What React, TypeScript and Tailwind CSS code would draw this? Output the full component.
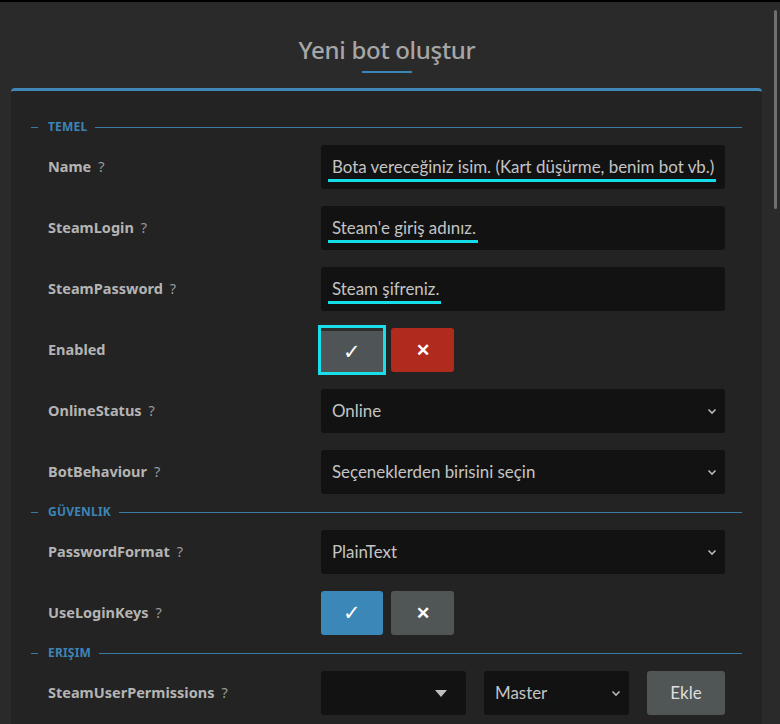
import { ReactNode } from 'react'

const font = { fontFamily: '"Noto Sans", "Open Sans", sans-serif' }
const fieldFont = { fontFamily: 'Lato, "Noto Sans", sans-serif' }

// Başlık şeridi (fieldset legend görünümü)
function Legend({ title, className = '' }: { title: string; className?: string }) {
    return (
        <div className={`flex items-center h-[16px] mb-[10px] ${className}`}>
            <div className="w-[7px] h-px bg-[#3b7aa3]" />
            <span className="ml-[10px] mr-[8px] text-[12px] font-bold tracking-[0.2px] text-[#3d85b6] leading-none">{title}</span>
            <div className="flex-1 h-px bg-[#3b7aa3]" />
        </div>
    )
}

function Row({ label, help = true, children }: { label: string; help?: boolean; children: ReactNode }) {
    return (
        <div className="flex items-center h-[44px] px-[17px]">
            <div className="w-[273px] shrink-0 text-[14.5px] font-bold text-[#b4b4b4]">
                {label}
                {help && <span className="ml-[7px] font-normal text-[#9a9a9a]">?</span>}
            </div>
            <div className="flex-1 h-full">{children}</div>
        </div>
    )
}

function TextInput({ text }: { text: string }) {
    return (
        <div className="h-full rounded-[3px] bg-[#121212] pl-[7px] flex items-center" style={fieldFont}>
            <span className="inline-block whitespace-nowrap pl-[4px] pr-[2px] pt-[3px] border-b-[3px] border-[#15dde8] text-[16.9px] leading-[24px] text-[#c4c4c4]">
                {text}
            </span>
        </div>
    )
}

function Chevron() {
    return (
        <svg width="10" height="7" viewBox="0 0 10 7" className="shrink-0">
            <path d="M1.5 1.5 L5 5 L8.5 1.5" fill="none" stroke="#b8b8b8" strokeWidth="1.6" />
        </svg>
    )
}

function Select({ value, className = '' }: { value: string; className?: string }) {
    return (
        <div className={`h-full rounded-[3px] bg-[#121212] pl-[11px] pr-[8px] flex items-center justify-between ${className}`} style={fieldFont}>
            <span className="text-[16.9px] text-[#c4c4c4] whitespace-nowrap">{value}</span>
            <Chevron />
        </div>
    )
}

function Toggle({ on, active, yesColor }: { on: boolean; active?: boolean; yesColor: string }) {
    return (
        <div className="flex items-center gap-[8px] h-full">
            <button
                className={`w-[62px] h-[44px] rounded-[3px] flex items-center justify-center text-white text-[21px] ${yesColor} ${
                    active ? 'outline-[3px] outline-solid outline-[#18dfe9] rounded-none border-t-[3px] border-[#2e2e2e]' : ''
                }`}
            >
                ✓
            </button>
            <button
                className={`w-[63px] h-[44px] rounded-[3px] flex items-center justify-center text-white text-[17px] font-bold ${
                    on ? 'bg-[#b12a1e]' : 'bg-[#505556]'
                }`}
            >
                ✕
            </button>
        </div>
    )
}

export default function App() {
    return (
        <div className="relative w-[780px] h-[724px] overflow-hidden bg-[#2a2a2a] border-t-2 border-black" style={font}>
            {/* kaydırma çubuğu */}
            <div className="absolute right-[3px] top-[8px] w-[3px] h-[199px] rounded-full bg-[#707070]" />

            <div className="pt-[33px] pr-[6px] flex flex-col items-center">
                <h1 className="text-[24px] font-medium text-[#a6a6a6] leading-[30px] tracking-[-0.3px]">Yeni bot oluştur</h1>
                <div className="mt-[6px] w-[50px] h-[2px] bg-[#3a86b8]" />
            </div>

            <div className="mt-[15px] ml-[11px] mr-[18px] rounded-t-[4px] border-t-[3px] border-[#3f88b8] bg-[#232323] pt-[28px] px-[20px] pb-[20px]">
                <Legend title="TEMEL" />
                <div className="flex flex-col gap-[17px]">
                    <Row label="Name">
                        <TextInput text="Bota vereceğiniz isim. (Kart düşürme, benim bot vb.)" />
                    </Row>
                    <Row label="SteamLogin">
                        <TextInput text="Steam'e giriş adınız." />
                    </Row>
                    <Row label="SteamPassword">
                        <TextInput text="Steam şifreniz." />
                    </Row>
                    <Row label="Enabled" help={false}>
                        <Toggle on active yesColor="bg-[#4f5456]" />
                    </Row>
                    <Row label="OnlineStatus">
                        <Select value="Online" />
                    </Row>
                    <Row label="BotBehaviour">
                        <Select value="Seçeneklerden birisini seçin" />
                    </Row>
                </div>

                <Legend title="GÜVENLIK" className="mt-[10px]" />
                <div className="flex flex-col gap-[17px]">
                    <Row label="PasswordFormat">
                        <Select value="PlainText" />
                    </Row>
                    <Row label="UseLoginKeys">
                        <Toggle on={false} yesColor="bg-[#3a87b8]" />
                    </Row>
                </div>

                <Legend title="ERIŞIM" className="mt-[10px]" />
                <Row label="SteamUserPermissions">
                    <div className="flex h-full gap-[18px]">
                        <div className="w-[145px] h-full rounded-[3px] bg-[#121212] flex items-center justify-end pr-[19px]">
                            <svg width="12" height="7" viewBox="0 0 12 7">
                                <path d="M0 0 H12 L6 7 Z" fill="#c0c0c0" />
                            </svg>
                        </div>
                        <Select value="Master" className="w-[145px]" />
                        <button className="flex-1 h-full rounded-[3px] bg-[#505556] text-[17px] text-[#dedede]" style={fieldFont}>Ekle</button>
                    </div>
                </Row>
            </div>
        </div>
    )
}
